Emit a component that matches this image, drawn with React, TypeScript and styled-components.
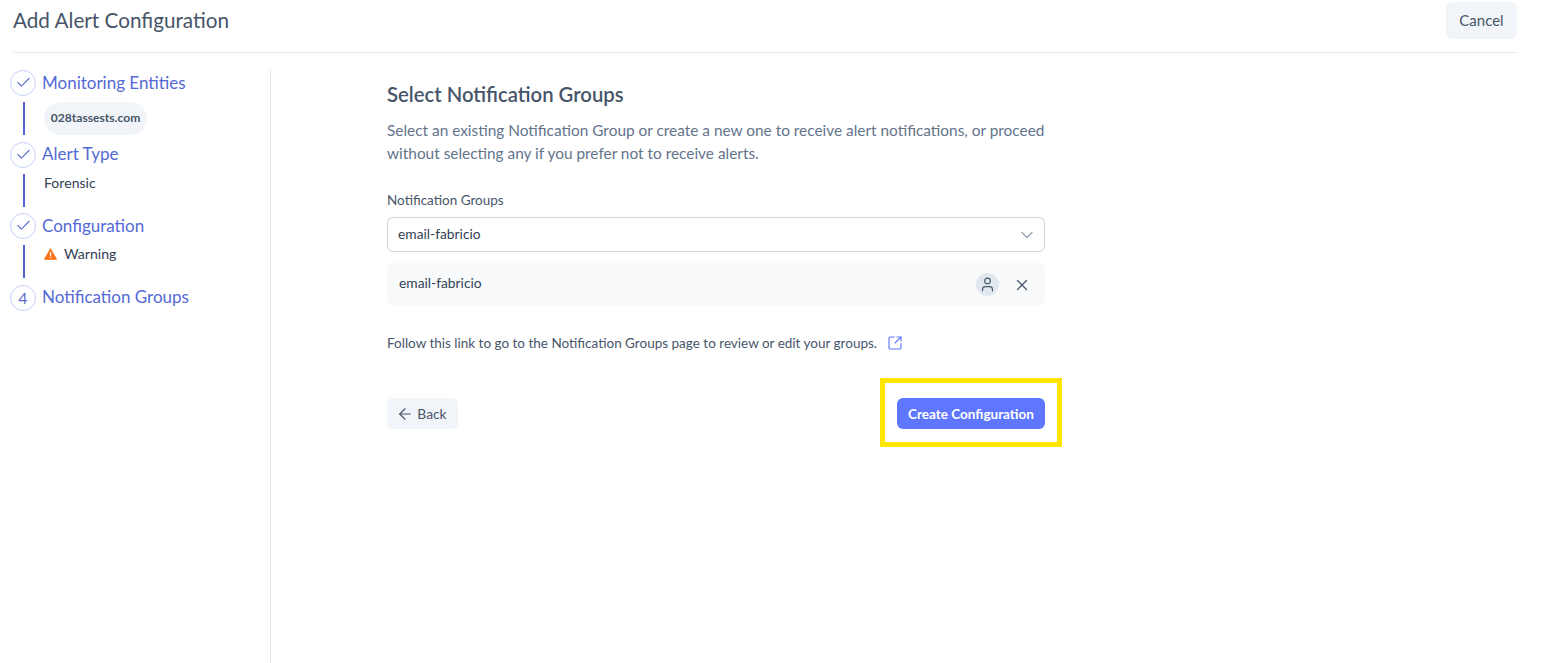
import React from "react";
import styled, { createGlobalStyle } from "styled-components";
import { Check, ChevronDown, X, User, ArrowLeft, SquareArrowOutUpRight } from "lucide-react";

const Global = createGlobalStyle`
  html, body { margin: 0; padding: 0; background: #fff; }
  body { font-family: "Lato", "Open Sans", sans-serif; color: #475569; }
  * { box-sizing: border-box; }
`;

const Page = styled.div`
  width: 1541px;
  height: 663px;
  overflow: hidden;
  padding: 0 24px 0 13px;
  display: flex;
  flex-direction: column;
`;

const Header = styled.header`
  height: 53px;
  flex: none;
  display: flex;
  align-items: flex-start;
  justify-content: space-between;
  border-bottom: 1px solid #e2e8f0;
`;

const PageTitle = styled.h1`
  margin: 8px 0 0;
  font-size: 20.7px;
  line-height: 25px;
  font-weight: 400;
  color: #475569;
`;

const GhostButton = styled.button`
  display: inline-flex;
  align-items: center;
  justify-content: center;
  gap: 3px;
  border: 0;
  border-radius: 6px;
  background: #f1f5f9;
  color: #475569;
  font-family: inherit;
  font-size: 15px;
  padding: 0;
`;

const CancelButton = styled(GhostButton)`
  margin-top: 2px;
  width: 71px;
  height: 37px;
  padding-bottom: 2px;
`;

const Body = styled.div`
  flex: 1;
  display: flex;
  padding-top: 17px;
  min-height: 0;
`;

const Sidebar = styled.nav`
  width: 261px;
  margin-left: -3px;
  flex: none;
  border-right: 1px solid #e2e8f0;
`;

const Step = styled.div`
  height: 71.5px;
`;

const StepHead = styled.div`
  display: flex;
  align-items: center;
  gap: 6px;
  height: 26px;
`;

const StepCircle = styled.span`
  width: 26px;
  height: 26px;
  flex: none;
  border-radius: 50%;
  border: 1px solid #c7d2fe;
  display: flex;
  align-items: center;
  justify-content: center;
  color: #5a6bc9;
  font-size: 16px;
  padding-bottom: 1px;
`;

const StepTitle = styled.span`
  font-size: 17px;
  line-height: 24px;
  margin-top: -1px;
  color: #5469d4;
`;

const StepBody = styled.div`
  margin: 6px 0 0 13px;
  height: 33px;
  border-left: 2px solid #4f63d2;
  padding-left: 19px;
  display: flex;
  align-items: flex-start;
`;

const Chip = styled.span`
  height: 33px;
  width: 103px;
  border-radius: 17px;
  background: #f1f5f9;
  display: flex;
  align-items: center;
  justify-content: center;
  font-size: 12.1px;
  font-weight: 700;
  color: #475569;
  padding-bottom: 2px;
`;

const StepNote = styled.span`
  display: flex;
  align-items: center;
  gap: 7px;
  font-size: 14.1px;
  line-height: 18px;
  color: #334155;
`;

const Main = styled.main`
  width: 658px;
  margin-left: 116px;
  padding-top: 12px;
`;

const SectionTitle = styled.h2`
  margin: 0;
  font-size: 20.3px;
  line-height: 25px;
  font-weight: 600;
  color: #475569;
`;

const Description = styled.p`
  margin: 12px 0 0;
  font-size: 15.4px;
  line-height: 23px;
  white-space: nowrap;
  color: #64748b;
`;

const FieldLabel = styled.label`
  display: block;
  margin-top: 26px;
  font-size: 13.5px;
  line-height: 18px;
  color: #475569;
`;

const Select = styled.div`
  margin-top: 8px;
  height: 35px;
  border: 1px solid #cbd5e1;
  border-radius: 6px;
  padding: 0 7px 0 10px;
  display: flex;
  align-items: center;
  justify-content: space-between;
  font-size: 13.8px;
  color: #334155;
`;

const SelectValue = styled.span`
  margin-top: -2px;
`;

const GroupRow = styled.div`
  margin-top: 11px;
  height: 43px;
  background: #f8fafc;
  border-radius: 6px;
  padding: 0 14px 0 12px;
  display: flex;
  align-items: center;
  justify-content: space-between;
  font-size: 13.8px;
  color: #334155;
`;

const GroupName = styled.span`
  margin-top: -4px;
`;

const RowActions = styled.div`
  display: flex;
  align-items: center;
  gap: 14px;
`;

const Avatar = styled.span`
  width: 23px;
  height: 23px;
  border-radius: 50%;
  background: #e2e8f0;
  display: flex;
  align-items: center;
  justify-content: center;
  color: #475569;
`;

const LinkLine = styled.p`
  margin: 28px 0 0;
  display: flex;
  align-items: center;
  gap: 10px;
  font-size: 13.5px;
  line-height: 18px;
  color: #475569;
`;

const Actions = styled.div`
  margin-top: 46px;
  display: flex;
  justify-content: space-between;
  align-items: center;
`;

const BackButton = styled(GhostButton)`
  width: 71px;
  height: 31px;
  font-size: 13.8px;
  padding-right: 2px;
`;

const HighlightAnchor = styled.div`
  position: relative;
`;

const PrimaryButton = styled.button`
  display: block;
  width: 148px;
  height: 31px;
  border: 0;
  border-radius: 6px;
  background: #5f77ff;
  color: #fff;
  font-family: inherit;
  font-size: 13.5px;
  font-weight: 700;
  padding: 0;
`;

const Highlight = styled.span`
  position: absolute;
  left: -17px;
  top: -20px;
  width: 182px;
  height: 69px;
  border: 5px solid #ffe600;
  pointer-events: none;
`;

const WarnIcon = () => (
  <svg width="13" height="12" viewBox="0 0 13 12">
    <path d="M6.5 0.5 L12.8 11.5 H0.2 Z" fill="#f97316" stroke="#f97316" strokeLinejoin="round" strokeWidth="0.6" />
    <rect x="5.9" y="4" width="1.3" height="4" fill="#fff" />
    <rect x="5.9" y="8.8" width="1.3" height="1.3" fill="#fff" />
  </svg>
);

export default function App() {
  return (
    <Page>
      <Global />
      <Header>
        <PageTitle>Add Alert Configuration</PageTitle>
        <CancelButton>Cancel</CancelButton>
      </Header>
      <Body>
        <Sidebar>
          <Step>
            <StepHead>
              <StepCircle><Check size={17} strokeWidth={1.5} /></StepCircle>
              <StepTitle>Monitoring Entities</StepTitle>
            </StepHead>
            <StepBody><Chip>028tassests.com</Chip></StepBody>
          </Step>
          <Step>
            <StepHead>
              <StepCircle><Check size={17} strokeWidth={1.5} /></StepCircle>
              <StepTitle>Alert Type</StepTitle>
            </StepHead>
            <StepBody><StepNote>Forensic</StepNote></StepBody>
          </Step>
          <Step>
            <StepHead>
              <StepCircle><Check size={17} strokeWidth={1.5} /></StepCircle>
              <StepTitle>Configuration</StepTitle>
            </StepHead>
            <StepBody><StepNote><WarnIcon />Warning</StepNote></StepBody>
          </Step>
          <Step>
            <StepHead>
              <StepCircle>4</StepCircle>
              <StepTitle>Notification Groups</StepTitle>
            </StepHead>
          </Step>
        </Sidebar>
        <Main>
          <SectionTitle>Select Notification Groups</SectionTitle>
          <Description>
            Select an existing Notification Group or create a new one to receive alert notifications, or proceed
            <br />
            without selecting any if you prefer not to receive alerts.
          </Description>
          <FieldLabel>Notification Groups</FieldLabel>
          <Select>
            <SelectValue>email-fabricio</SelectValue>
            <ChevronDown size={20} strokeWidth={1.5} color="#94a3b8" />
          </Select>
          <GroupRow>
            <GroupName>email-fabricio</GroupName>
            <RowActions>
              <Avatar><User size={17} strokeWidth={1.6} /></Avatar>
              <X size={18} strokeWidth={1.7} color="#475569" />
            </RowActions>
          </GroupRow>
          <LinkLine>
            Follow this link to go to the Notification Groups page to review or edit your groups.
            <SquareArrowOutUpRight size={16} strokeWidth={1.7} color="#5f77ff" />
          </LinkLine>
          <Actions>
            <BackButton><ArrowLeft size={18} strokeWidth={1.5} />Back</BackButton>
            <HighlightAnchor>
              <PrimaryButton>Create Configuration</PrimaryButton>
              <Highlight />
            </HighlightAnchor>
          </Actions>
        </Main>
      </Body>
    </Page>
  );
}
